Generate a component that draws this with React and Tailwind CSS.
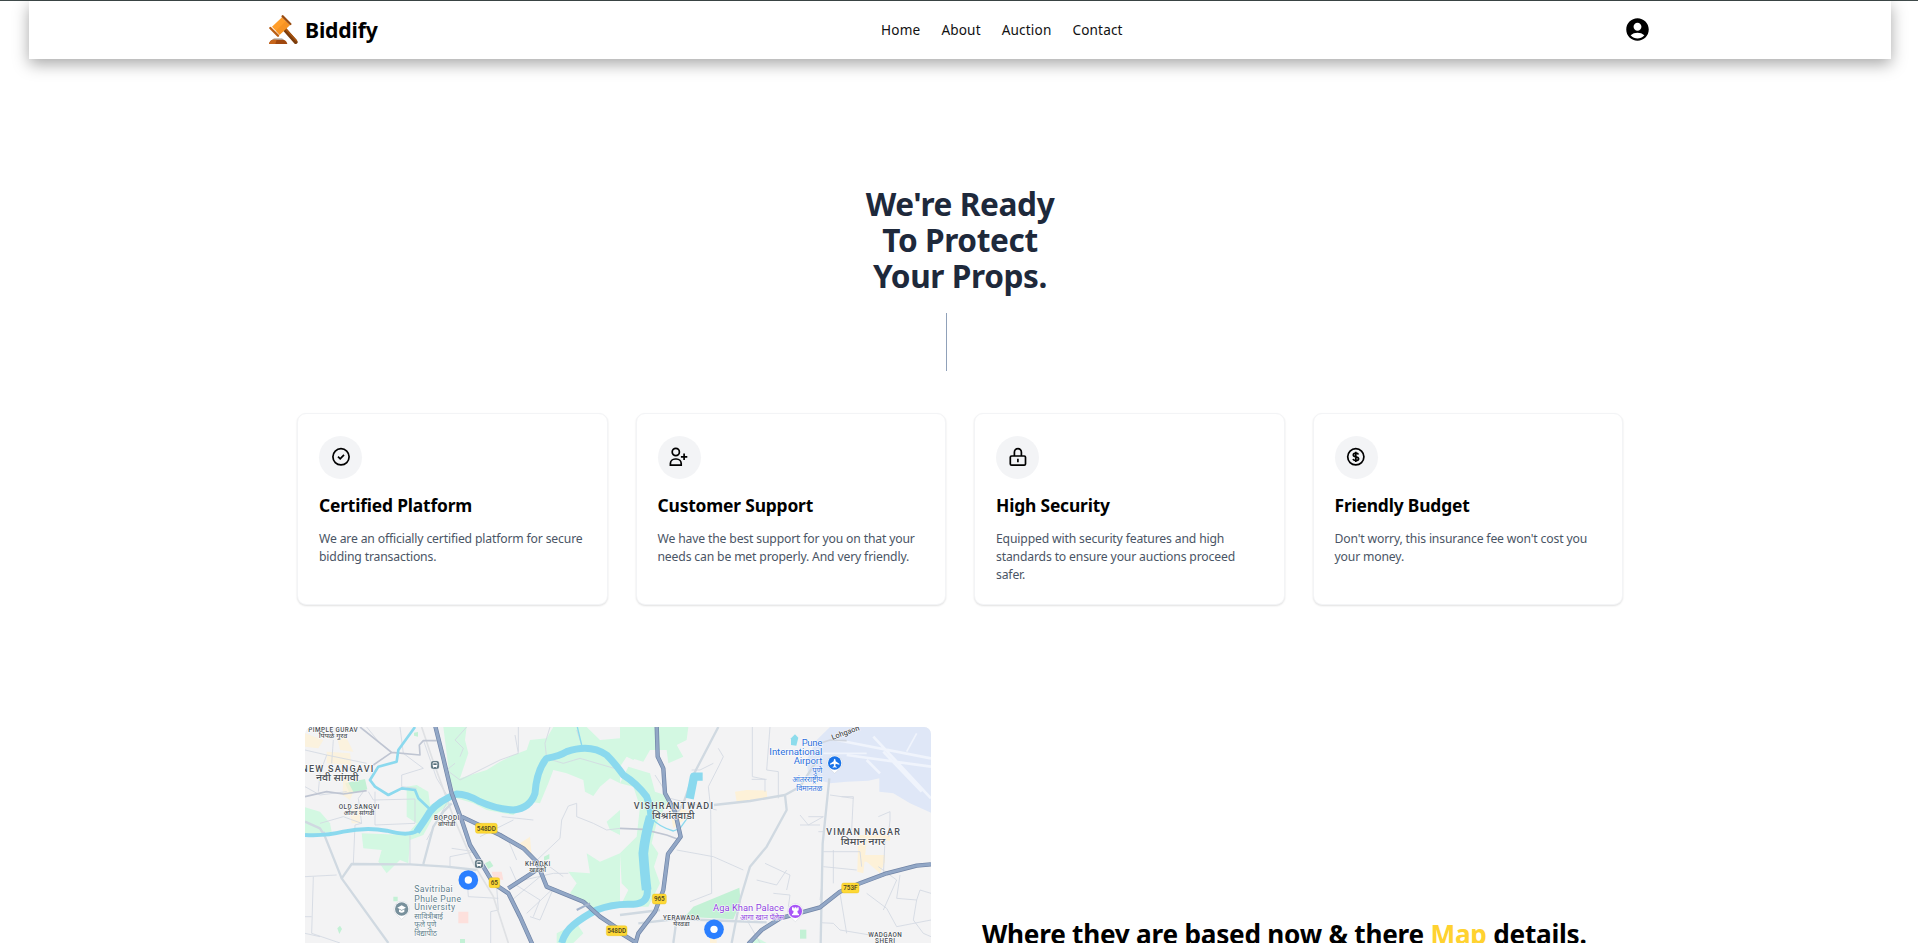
import { MdAccountCircle } from "react-icons/md";

function Gavel() {
  return (
    <svg viewBox="807 45 87 87" className="size-[29px] shrink-0" fill="none" strokeLinecap="round">
      <path d="M852 86 L887 126" stroke="#7a3c0c" strokeWidth="12" />
      <path d="M856 86 L889 122" stroke="#a5520f" strokeWidth="5" />
      <path d="M816 80 L846 52 L869 76 L839 104 Z" fill="#ff9d2a" />
      <path d="M828 92 L857 64 L869 76 L839 104 Z" fill="#f79323" />
      <path d="M848 49 L871 72" stroke="#9a4c10" strokeWidth="7" />
      <path d="M811 84 L834 107" stroke="#b95e14" strokeWidth="7" />
      <path d="M816 120 L822 115 H846 L852 120 Z" fill="#b9b4b0" />
      <path d="M807 132 Q809 121 818 119 H850 Q860 121 862 132 Z" fill="#a0480e" />
      <path d="M807 132 Q809 121 818 119 H830 L826 132 Z" fill="#c7651a" />
    </svg>
  );
}

const icons = {
  check: (
    <>
      <circle cx="12" cy="11.8" r="8.1" />
      <path d="M9 11.6l2.2 2.2 3.8-4" />
    </>
  ),
  user: (
    <>
      <circle cx="8.8" cy="7" r="3.6" />
      <path d="M3.4 20.2v-1.6a4.7 4.7 0 0 1 4.7-4.6h1.4a4.7 4.7 0 0 1 4.7 4.6v1.6zM17.1 8.6v6.4M13.9 11.8h6.4" />
    </>
  ),
  lock: (
    <>
      <rect x="4.3" y="11" width="15.2" height="9.2" rx="1.3" />
      <path d="M8.4 11V7.2a3.5 3.5 0 0 1 7 0V11M11.9 13.8v3.4" />
    </>
  ),
  dollar: (
    <>
      <circle cx="11.8" cy="11.8" r="8.1" />
      <path d="M14.4 9.5c-.3-.9-1.2-1.3-2.6-1.3-1.5 0-2.5.6-2.5 1.7 0 2.6 5.3 1.2 5.3 3.9 0 1.2-1.1 1.8-2.7 1.8-1.5 0-2.6-.5-2.9-1.5M11.8 6.8v10.2" />
    </>
  ),
};

const cards = [
  { icon: "check", title: "Certified Platform", lines: ["We are an officially certified platform for secure", "bidding transactions."] },
  { icon: "user", title: "Customer Support", lines: ["We have the best support for you on that your", "needs can be met properly. And very friendly."] },
  { icon: "lock", title: "High Security", lines: ["Equipped with security features and high", "standards to ensure your auctions proceed", "safer."] },
  { icon: "dollar", title: "Friendly Budget", lines: ["Don't worry, this insurance fee won't cost you", "your money."] },
];

function Card({ icon, title, lines }) {
  return (
    <div className="h-[192px] rounded-[9px] border border-gray-100 bg-white px-[21px] pt-[22px] shadow-[0_1px_2px_rgba(0,0,0,0.12)]">
      <div className="flex size-[43px] items-center justify-center rounded-full bg-gray-100">
        <svg viewBox="0 1 24 24" className="size-6" fill="none" stroke="#000" strokeWidth="1.7">
          {icons[icon]}
        </svg>
      </div>
      <h3 className="mt-[14px] text-[17.4px] leading-[25px] font-bold tracking-[-0.17px] whitespace-nowrap text-black">{title}</h3>
      <p className="mt-[12px] text-[12.2px] leading-[18px] tracking-[-0.16px] whitespace-nowrap text-gray-600">
        {lines.map((l) => (
          <span key={l} className="block">{l}</span>
        ))}
      </p>
    </div>
  );
}

function Shield({ x, y, w, label }) {
  return (
    <g>
      <rect x={x - w / 2} y={y - 15} width={w} height="30" rx="6" fill="#fdd835" stroke="#e6b800" strokeWidth="1" />
      <text x={x} y={y + 7} textAnchor="middle" fontSize="19" fontWeight="500" fill="#4a4320">{label}</text>
    </g>
  );
}

function Train({ x, y }) {
  return (
    <g>
      <rect x={x - 13} y={y - 13} width="26" height="26" rx="7" fill="#546e7a" stroke="#fff" strokeWidth="2" />
      <rect x={x - 7} y={y - 8} width="14" height="14" rx="3" fill="#fff" />
      <rect x={x - 5} y={y - 5} width="10" height="5" fill="#546e7a" />
      <path d={`M${x - 6} ${y + 10} l3 -4 M${x + 6} ${y + 10} l-3 -4`} stroke="#fff" strokeWidth="2" />
    </g>
  );
}

function Pin({ x, y, color, children }) {
  return (
    <g>
      <path d={`M${x} ${y + 31} L${x - 14} ${y + 18} A23 23 0 1 1 ${x + 14} ${y + 18} Z`} fill="#fff" stroke="#cfd3d8" strokeWidth="1.5" />
      <circle cx={x} cy={y} r="20" fill={color} />
      {children}
    </g>
  );
}

function Dot({ x, y }) {
  return (
    <g>
      <circle cx={x} cy={y} r="29.5" fill="#2b7fff" />
      <circle cx={x} cy={y} r="11" fill="#fff" />
    </g>
  );
}

/* Each line is [text, vertical offset, font size, drawn width]. Devanagari is
   stretched as a whole so that its headline stays unbroken. */
function Label({ x, y, lines, fill = "#4a4f55", anchor = "middle", weight = 500 }) {
  return (
    <g fill={fill} stroke="#fff" strokeWidth="3" strokeLinejoin="round" paintOrder="stroke" textAnchor={anchor} fontWeight={weight}>
      {lines.map(([text, dy, size, w]) => (
        <text
          key={text}
          x={x}
          y={y + dy}
          fontSize={size}
          textLength={w}
          lengthAdjust={/[\u0900-\u097f]/.test(text) ? "spacingAndGlyphs" : "spacing"}
        >
          {text}
        </text>
      ))}
    </g>
  );
}

function CityMap() {
  return (
    <svg viewBox="15 21 1878 648" className="block h-[216px] w-[626px] font-[Roboto,'Noto_Sans',sans-serif]" fill="none">
      <rect x="15" y="21" width="1878" height="648" fill="#f3f3f4" />

      <g fill="#d3f8e2">
        <path d="M430 21 H500 L495 60 L505 100 L480 175 L560 150 L600 125 L640 105 L680 90 L690 60 L740 55 L760 21 H860 L900 60 L960 55 V190 L930 175 L900 200 L880 228 L855 215 L850 180 L800 160 L760 150 L745 190 L720 250 L690 245 L640 285 L560 270 L520 250 L470 235 L450 180 Z" />
        <path d="M320 200 L350 195 L385 215 L390 255 L440 235 L450 250 L400 290 L370 345 L330 360 L325 430 L300 420 L260 460 L235 425 L245 390 L190 385 L185 340 L320 345 L350 310 L320 290 Z" />
        <path d="M15 262 L60 275 L90 310 L95 335 L15 345 Z" />
        <path d="M805 455 L870 460 L860 400 L900 425 L960 400 V560 L880 570 L850 545 L810 520 L830 490 Z" />
        <path d="M920 305 L960 270 V345 L930 330 Z" />
        <path d="M960 100 L1000 120 L1050 80 L1045 45 L960 60 Z" />
        <path d="M960 21 H1165 L1160 60 L1130 75 L1150 110 L1105 130 L1100 90 L1050 90 L1030 125 L980 110 L960 140 Z" />
        <path d="M960 190 L1000 200 L1020 260 L1010 350 L960 400 L965 490 L985 510 L960 560 H1045 L1080 490 L1062 440 L1075 400 L1055 370 L1070 310 L1110 230 L1065 215 L1050 160 L985 140 Z" />
        <path d="M770 640 L830 610 L850 640 L820 669 H770 Z" />
        <path d="M1340 669 L1365 650 L1400 669 Z" />
      </g>
      <g fill="#c3f1d5">
        <path d="M135 190 L195 177 L202 208 L150 222 Z" />
        <path d="M1155 590 L1180 560 L1318 503 L1322 545 L1300 598 Z" />
        <path d="M555 430 L570 422 L580 438 L565 447 Z M342 38 l12 -2 v14 l-12 -3 Z M280 530 h13 v14 h-13 Z M112 625 l8 -8 6 10 -8 15 Z M480 657 h15 v12 h-15 Z M732 410 l16 -8 v14 l-16 6 Z" />
        <rect x="1500" y="629" width="19" height="27" />
      </g>
      <g fill="#fdf1d8">
        <path d="M15 40 L70 60 L55 85 L15 80 Z M80 95 L150 100 L155 135 L80 130 Z M110 45 L140 55 L160 95 L120 90 Z M130 160 L160 215 L150 240 L128 225 Z M150 268 H180 V310 H155 Z" opacity=".8" />
        <path d="M660 370 L690 350 L695 410 L670 385 Z M1305 215 L1340 210 L1400 212 L1402 235 L1310 245 Z M1110 270 L1150 265 L1170 285 L1120 325 Z M1675 345 H1770 V362 H1700 L1690 460 L1672 455 Z M1682 405 H1755 V425 L1740 460 L1700 425 H1682 Z M1230 645 h20 v24 h-20 Z" />
      </g>
      <path d="M575 455 L605 455 L610 480 L580 475 Z M475 575 H505 V610 H475 Z" fill="#fde0dc" />
      <path d="M1590 21 H1893 V278 L1830 250 L1780 220 L1738 215 V175 L1705 182 L1640 185 L1590 190 L1525 170 L1520 120 L1550 60 Z" fill="#dfe7f7" />
      <g stroke="#f0f4fc" strokeWidth="8">
        <path d="M1610 60 L1893 115 M1640 105 L1893 140 M1720 50 L1893 235 M1750 95 L1865 215 M1700 120 L1740 160" />
        <path d="M1570 100 H1700 M1820 95 L1850 40" strokeWidth="5" />
      </g>
      <path d="M1473 55 l12 -12 10 10 -6 24 -16 -2 Z" fill="#8ddcec" />

      <g stroke="#d3d9e2" strokeWidth="2.6">
        <path d="M15 90 L80 105 L200 130 M80 105 L60 160 L55 215 M100 60 L95 130 M200 21 L240 70 L275 100 M190 215 L175 235 L185 310 L165 315 L160 430 M15 200 L60 225 L140 215 M205 215 L220 240 L345 237 L345 310 L225 315 M225 215 V315 M60 310 L130 290 L185 310" />
        <path d="M300 21 L310 100 L370 145 L305 165 V200 L350 205 M370 60 L410 175 L450 240 M330 345 V435 M500 21 L465 60 L490 85 L480 110 M465 130 L440 150 L480 180 L600 120 L655 100 L645 45 M15 470 L110 465 M40 470 L35 640 L120 669 M15 590 H35 M15 640 L60 650 M590 500 L595 570 L572 575 V669 M500 455 L505 530 L595 535" />
        <path d="M655 21 V95 M440 250 L380 360 M455 385 L525 395 L450 410 V440 M540 350 L640 300 M830 30 L845 75 M750 21 L735 70 L740 115 L790 130 L840 115 L960 150" />
        <path d="M690 440 L780 355 L785 300 L805 258 L830 250 L830 290 L880 310 L920 330 L960 325 M630 545 L720 470 M680 580 L760 505 M640 490 L720 540 L700 590 M760 505 L720 600 L690 590 M630 440 L650 485 L760 460 L805 460 M620 350 L650 420 M605 290 L700 300 M735 430 L790 470" />
        <path d="M1255 85 L1270 110 L1258 135 L1225 200 L1232 265 L1235 520 L1170 545 M1240 130 L1200 150 L1175 150 M1357 21 V170 L1395 178 V215 M1410 21 L1400 150 L1435 155 V235 M1355 178 H1400 M1130 390 L1240 410 L1330 450 M1065 165 L1110 235 L1250 270" />
        <path d="M1395 430 L1470 465 L1460 510 M1370 480 L1430 495 L1460 450 M1420 520 L1470 525 L1465 560 M1335 590 L1380 669 M1500 285 L1525 315 L1570 290 L1525 290 M1560 315 H1500 M1570 395 H1680 L1685 440 M1570 440 L1670 450 M1555 335 H1570 M1625 230 H1660 L1655 330 M1735 290 L1770 275 V300 L1765 350 M1590 225 L1660 235" />
        <path d="M1700 520 L1760 565 L1790 620 L1893 600 M1800 465 L1790 535 L1850 540 L1860 510 L1893 520 M1735 440 L1790 480 L1750 570 M1850 540 L1840 600 L1870 640 L1893 650 M1565 500 L1560 540 M1620 520 L1640 640 M1560 608 L1600 610 L1620 630 L1740 650 M1755 355 L1750 470 M1600 390 V490" />
      </g>
      <g stroke="#dfe1e4" strokeWidth="5">
        <path d="M365 21 L400 125 L460 290 L520 430 L580 530 L625 669" />
      </g>
      <g stroke="#d0d9e1" strokeWidth="7" strokeLinejoin="round">
        <path d="M70 335 L75 350 L125 475 L265 669 M125 475 L155 432 L330 433 L440 440 L530 450 M370 432 L400 320 L430 275 L455 250 M15 305 L60 325 L75 350" />
        <path d="M1242 255 L1350 243 L1455 225 L1500 200 L1545 130 M1455 225 L1460 270 L1400 380 L1350 440 L1320 540 L1295 669 M1588 175 L1568 370 L1562 669 M1120 295 L1150 250 L1180 165 L1255 21 M1015 610 L1130 597 L1400 607 M1130 597 L1120 669 M960 585 L1080 570" />
      </g>
      <g stroke="#bfc5d2" strokeWidth="5" strokeLinejoin="round">
        <path d="M15 230 L80 215 L130 222 L200 212 M410 62 H370 L358 75 L360 105 L275 97 L220 135 M180 21 L275 97 M960 325 L1030 328 L1100 345 L1140 360" />
        <path d="M1545 75 L1590 60 L1640 62" stroke="#d0d5de" />
      </g>

      <g stroke="#8bd9ee" strokeLinejoin="round">
        <path d="M350 335 Q375 300 390 275 Q420 240 470 222 Q500 222 540 245 Q590 268 640 270 Q690 265 705 220 Q710 150 740 115 Q780 108 800 95 Q870 70 920 105 Q945 130 970 165 Q1010 190 1040 230 Q1055 270 1052 300 Q1030 350 1030 400 Q1035 470 1042 510 Q1045 550 1000 553 Q940 550 890 570 Q850 590 820 615 Q795 635 785 669" strokeWidth="21" />
        <path d="M15 345 Q80 348 130 335 Q200 320 260 332 Q325 350 352 332" strokeWidth="12" />
        <path d="M1052 290 Q1035 350 1030 400 Q1035 470 1040 510" strokeWidth="29" />
        <path d="M345 21 L295 90 L290 125 L235 140 L210 180 L225 200 L265 225 L305 205 L345 210 L355 235 L390 268" strokeWidth="8" />
        <path d="M832 21 L845 75 M1050 290 Q1075 320 1120 333 L1140 325 L1165 290" strokeWidth="4" />
        <path d="M1169 236 L1182 170 H1208" strokeWidth="25" />
      </g>

      <g stroke="#7084a6" strokeLinejoin="round" strokeWidth="13">
        <path d="M405 15 L430 115 L455 220 L485 300 L510 375 L550 440 L580 490 L625 520 L660 590 L698 675" />
        <path d="M1070 15 L1073 110 L1090 145 L1095 220 L1125 275 L1142 350 L1104 402 L1090 510 L1065 575 L1015 640 L1005 675 M960 638 L1010 669" />
        <path d="M485 290 L600 345 L670 385 L710 425 L740 500 L850 545 L900 590 L960 630 M625 505 L710 450 M1345 672 L1385 630 L1440 595 L1560 562 L1620 515 L1680 490 L1760 460 L1850 437 L1893 433" />
      </g>
      <g stroke="#92a7c6" strokeLinejoin="round" strokeWidth="9">
        <path d="M405 15 L430 115 L455 220 L485 300 L510 375 L550 440 L580 490 L625 520 L660 590 L698 675" />
        <path d="M1070 15 L1073 110 L1090 145 L1095 220 L1125 275 L1142 350 L1104 402 L1090 510 L1065 575 L1015 640 L1005 675 M960 638 L1010 669" />
        <path d="M485 290 L600 345 L670 385 L710 425 L740 500 L850 545 L900 590 L960 630 M625 505 L710 450 M1345 672 L1385 630 L1440 595 L1560 562 L1620 515 L1680 490 L1760 460 L1850 437 L1893 433" />
      </g>
      <path d="M830 570 L870 550" stroke="#a5b4cc" strokeWidth="6" />

      <Train x={405} y={135} />
      <Train x={537} y={432} />

      <Shield x={559} y={325} w={65} label="548DD" />
      <Shield x={583} y={488} w={32} label="65" />
      <Shield x={950} y={632} w={62} label="548DD" />
      <Shield x={1078} y={537} w={42} label="965" />
      <Shield x={1651} y={504} w={52} label="753F" />

      <Label x={99} y={35} lines={[["PIMPLE GURAV", 0, 19, 148], ["पिंपळे गुरव", 18, 19, 86]]} />
      <Label x={112} y={155} lines={[["NEW SANGAVI", 0, 27, 216], ["नवी सांगवी", 29, 28, 128]]} />
      <Label x={177} y={266} lines={[["OLD SANGVI", 0, 19, 122], ["ओल्ड सांगवी", 18, 19, 92]]} />
      <Label x={440} y={299} lines={[["BOPODI", 0, 19, 76], ["बोपोडी", 19, 19, 52]]} />
      <Label x={713} y={437} lines={[["KHADKI", 0, 19, 76], ["खडकी", 18, 19, 50]]} />
      <Label x={1120} y={266} lines={[["VISHRANTWADI", 0, 27, 238], ["विश्रांतवाडी", 30, 28, 128]]} />
      <Label x={1689} y={346} lines={[["VIMAN NAGAR", 0, 27, 221], ["विमान नगर", 29, 28, 134]]} />
      <Label x={1144} y={599} lines={[["YERAWADA", 0, 19, 110], ["येरवडा", 18, 19, 50]]} />
      <Label x={1755} y={651} lines={[["WADGAON", 0, 19, 100], ["SHERI", 17, 19, 60]]} />
      <Label x={343} y={517} anchor="start" weight={400} fill="#607d8b" lines={[["Savitribai", 0, 26, 115], ["Phule Pune", 28, 26, 140], ["University", 53, 26, 122], ["सावित्रीबाई", 80, 23, 86], ["फुले पुणे", 105, 23, 66], ["विद्यापीठ", 130, 23, 68]]} />
      <Label x={1567} y={77} anchor="end" weight={400} fill="#2b6fdb" lines={[["Pune", 0, 29, 62], ["International", 29, 29, 159], ["Airport", 54, 29, 86], ["पुणे", 82, 23, 30], ["आंतरराष्ट्रीय", 109, 23, 90], ["विमानतळ", 135, 23, 78]]} />
      <Label x={1452} y={572} anchor="end" weight={400} fill="#8e3fe0" lines={[["Aga Khan Palace", 0, 28, 213], ["आगा खान पॅलेस", 27, 23, 132]]} />
      <g transform="rotate(-20 1597 58)">
        <Label x={1597} y={60} lines={[["Lohgaon", 0, 23, 88]]} anchor="start" />
      </g>

      <Pin x={305} y={567} color="#78909c">
        <path d="M305 556 l13 7 -13 7 -13 -7 Z M297 568 v7 q8 6 16 0 v-7 l-8 4 Z" fill="#fff" />
      </Pin>
      <Pin x={1604} y={129} color="#1a73e8">
        <path d="M1604 116 q3 1 3 8 l11 7 v3 l-11 -3 -1 7 4 3 v2 l-6 -1 -6 1 v-2 l4 -3 -1 -7 -11 3 v-3 l11 -7 q0 -7 3 -8 Z" fill="#fff" />
      </Pin>
      <Pin x={1486} y={574} color="#a855f7">
        <path d="M1476 562 h5 v3 h3 v-3 h5 v3 h3 v-3 h4 v9 l-4 2 2 8 h3 v5 h-21 v-5 h3 l2 -8 -5 -2 Z" fill="#fff" />
      </Pin>
      <Dot x={505} y={480} />
      <Dot x={1242} y={628} />
    </svg>
  );
}

export default function App() {
  return (
    <div className="flex h-[943px] flex-col overflow-hidden bg-white font-['Noto_Sans','Open_Sans',sans-serif]">
      <div className="h-px shrink-0 bg-[#3f4a4a]" />
      <header className="mr-[27px] ml-[29px] flex h-[58px] shrink-0 items-center justify-between bg-white px-[240px] pb-[2px] shadow-[0_5px_15px_rgba(0,0,0,0.35)]">
        <div className="flex items-center gap-[7px]">
          <Gavel />
          <span className="text-[21.2px] leading-[29px] font-bold tracking-[-0.15px] text-black">Biddify</span>
        </div>
        <nav className="flex gap-[21px] pt-[2px] pl-[2px] text-[13.6px] tracking-[0.15px] text-[#111]">
          {["Home", "About", "Auction", "Contact"].map((l) => (
            <a key={l}>{l}</a>
          ))}
        </nav>
        <MdAccountCircle className="size-[27px] text-black" />
      </header>

      <h1 className="mt-[127px] flex shrink-0 flex-col items-center pl-[2px] text-[31.6px] leading-[36px] font-bold tracking-[-0.4px] whitespace-nowrap text-[#1e293b]">
        <span>We're Ready</span>
        <span>To Protect</span>
        <span>Your Props.</span>
      </h1>
      <div className="mt-[19px] ml-[946px] h-[58px] w-px shrink-0 bg-slate-400" />

      <section className="mt-[42px] ml-[297px] grid w-[1326px] shrink-0 grid-cols-4 gap-[28px]">
        {cards.map((c) => (
          <Card key={c.title} {...c} />
        ))}
      </section>

      <section className="mt-[122px] ml-[305px] flex shrink-0">
        <div className="overflow-hidden rounded-t-[7px]">
          <CityMap />
        </div>
        <h2 className="mt-[189px] ml-[51px] text-[26.2px] leading-[36px] font-bold tracking-[-0.25px] whitespace-nowrap text-black">
          Where they are based now &amp; there <span className="text-[#ffd230]">Map</span> details.
        </h2>
      </section>
    </div>
  );
}
